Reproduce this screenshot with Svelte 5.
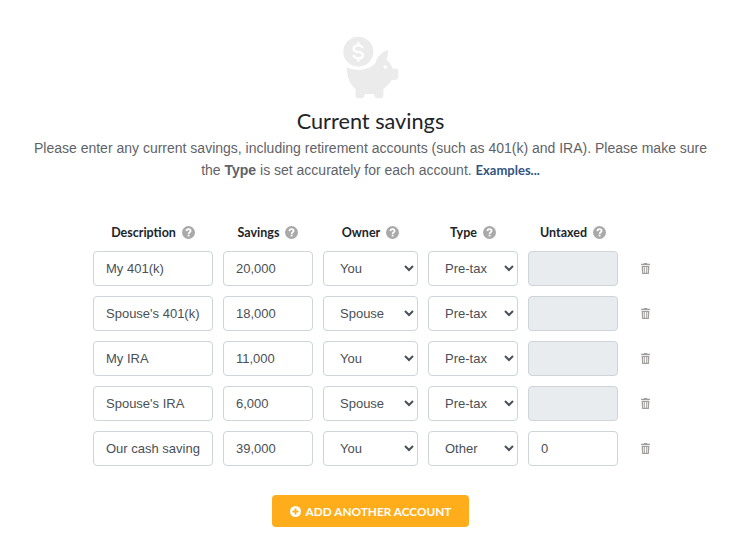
<script lang="ts">
  interface Account {
    description: string;
    savings: string;
    owner: string;
    type: string;
    untaxed: string | null;
  }

  const headers = [
    { label: "Description", cls: "c-desc" },
    { label: "Savings", cls: "c-sav" },
    { label: "Owner", cls: "c-own" },
    { label: "Type", cls: "c-type" },
    { label: "Untaxed", cls: "c-unt" },
  ];

  const accounts: Account[] = [
    { description: "My 401(k)", savings: "20,000", owner: "You", type: "Pre-tax", untaxed: null },
    { description: "Spouse's 401(k)", savings: "18,000", owner: "Spouse", type: "Pre-tax", untaxed: null },
    { description: "My IRA", savings: "11,000", owner: "You", type: "Pre-tax", untaxed: null },
    { description: "Spouse's IRA", savings: "6,000", owner: "Spouse", type: "Pre-tax", untaxed: null },
    { description: "Our cash savings", savings: "39,000", owner: "You", type: "Other", untaxed: "0" },
  ];
</script>

<main class="page">
  <svg class="pig" width="100" height="90" viewBox="0 0 300 270" aria-hidden="true">
    <circle cx="115" cy="95" r="45" fill="#ebebeb" />
    <path
      fill="#ebebeb"
      d="M80 142C97 152 142 156 166 130C172 110 185 95 204 90C206 100 201 112 200 119C208 125 214 135 218 146L228 146Q235 146 235 153L235 172Q235 179 228 179L215 180C208 192 200 200 190 207L190 228Q190 235 183 235L172 235Q166 235 164 229L161 222L135 222L133 229Q131 235 125 235L114 235Q107 235 107 228L107 207C90 195 80 170 80 142Z"
    />
    <circle cx="196" cy="141" r="5.5" fill="#fff" />
    <path
      fill="none"
      stroke="#fff"
      stroke-width="7"
      d="M128 84C125 78 120 76 114 76C106 76 101 81 101 87C101 101 129 91 129 105C129 111 123 115 115 115C108 115 103 112 100 106M115 66V76M115 115V125"
    />
  </svg>

  <h1>Current savings</h1>
  <p class="intro">
    Please enter any current savings, including retirement accounts (such as 401(k) and IRA). Please make sure
    the <strong>Type</strong> is set accurately for each account. <span class="examples">Examples...</span>
  </p>

  <div class="table">
    <div class="row head">
      {#each headers as h}
        <div class="th {h.cls}">
          {h.label}
          <svg class="help" width="13" height="13" viewBox="0 0 13 13" aria-hidden="true">
            <circle cx="6.5" cy="6.5" r="6.5" fill="#a9a9a9" />
            <path fill="none" stroke="#fff" stroke-width="1.7" d="M4.4 5.1C4.5 3.8 5.4 3.2 6.5 3.2C7.7 3.2 8.6 3.9 8.6 4.9C8.6 6.2 6.6 6.3 6.6 7.9" />
            <rect x="5.7" y="8.7" width="1.8" height="1.7" fill="#fff" />
          </svg>
        </div>
      {/each}
    </div>

    {#each accounts as a}
      <div class="row">
        <input class="field c-desc" type="text" value={a.description} />
        <input class="field c-sav" type="text" value={a.savings} />
        <select class="field c-own" value={a.owner}>
          <option>You</option>
          <option>Spouse</option>
        </select>
        <select class="field c-type" value={a.type}>
          <option>Pre-tax</option>
          <option>Other</option>
        </select>
        <input class="field c-unt" type="text" value={a.untaxed ?? ""} disabled={a.untaxed === null} />
        <svg class="trash" width="9" height="11" viewBox="0 0 9 11" aria-hidden="true">
          <path fill="#a39e9e" d="M3 0H6L6.4 .8H9V2H0V.8H2.6ZM.6 2.7H8.4L7.9 11H1.1ZM2.3 4V9.8H3.2V4ZM4 4V9.8H5V4ZM5.8 4V9.8H6.7V4Z" fill-rule="evenodd" />
        </svg>
      </div>
    {/each}
  </div>

  <button class="add" type="button">
    <svg width="11" height="11" viewBox="0 0 11 11" aria-hidden="true">
      <circle cx="5.5" cy="5.5" r="5.5" fill="#fff" />
      <rect x="2.5" y="4.6" width="6" height="1.8" fill="#ffad1a" />
      <rect x="4.6" y="2.5" width="1.8" height="6" fill="#ffad1a" />
    </svg>
    ADD ANOTHER ACCOUNT
  </button>
</main>

<style>
  :global(body) {
    margin: 0;
    background: #fff;
  }

  .page {
    width: 741px;
    height: 539px;
    overflow: hidden;
    display: flex;
    flex-direction: column;
    align-items: center;
    padding-top: 20px;
    box-sizing: border-box;
    font-family: "Liberation Sans", Arial, sans-serif;
  }

  .pig {
    display: block;
    margin-left: -2px;
  }

  h1 {
    margin: -1px 0 0;
    font-family: Lato, sans-serif;
    font-size: 21.7px;
    font-weight: 400;
    line-height: 24px;
    color: #212529;
  }

  .intro {
    width: 690px;
    margin: 4px 0 0;
    font-size: 14px;
    line-height: 22px;
    text-align: center;
    color: #5f6368;
  }

  .intro strong {
    font-weight: 700;
  }

  .examples {
    font-family: Lato, sans-serif;
    font-size: 13px;
    font-weight: 700;
    color: #34557f;
  }

  .table {
    align-self: flex-start;
    margin-top: 39px;
    margin-left: 93px;
    display: flex;
    flex-direction: column;
    gap: 10px;
  }

  .row {
    display: flex;
    align-items: center;
    gap: 10px;
  }

  .head {
    height: 25px;
    margin-bottom: -4px;
  }

  .th {
    display: flex;
    align-items: center;
    justify-content: center;
    gap: 6px;
    font-family: Lato, sans-serif;
    font-size: 12.5px;
    font-weight: 700;
    color: #212529;
  }

  .c-desc {
    width: 120px;
  }
  .c-sav {
    width: 90px;
  }
  .c-own {
    width: 95px;
  }
  .c-type {
    width: 90px;
  }
  .c-unt {
    width: 90px;
  }

  .field {
    flex: none;
    height: 35px;
    box-sizing: border-box;
    margin: 0;
    padding: 0 12px;
    border: 1px solid #ced4da;
    border-radius: 4px;
    background: #fff;
    font-family: "Liberation Sans", Arial, sans-serif;
    font-size: 13px;
    color: #495057;
    outline: none;
  }

  select.field {
    padding: 0 0 0 12px;
  }

  .field:disabled {
    background: #e9ecef;
  }

  .trash {
    margin-left: 13px;
    flex: none;
  }

  .add {
    display: flex;
    align-items: center;
    justify-content: center;
    gap: 5px;
    width: 197px;
    height: 32px;
    margin-top: 29px;
    padding: 0;
    border: none;
    border-radius: 4px;
    background: #ffad1a;
    color: #fff;
    font-family: Lato, sans-serif;
    font-size: 11.8px;
    font-weight: 700;
  }
</style>
